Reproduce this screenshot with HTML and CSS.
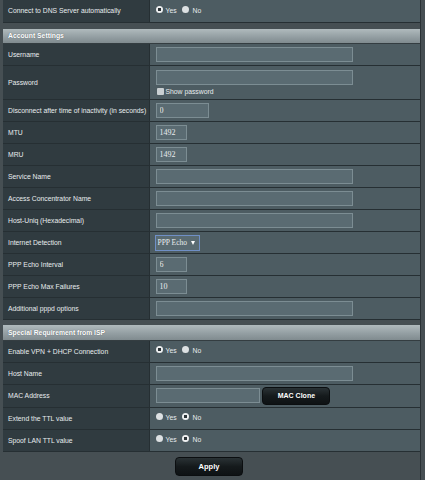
FILE: index.html
```html
<!DOCTYPE html>
<html lang="en">
<head>
    <meta charset="UTF-8">
    <meta name="viewport" content="width=device-width, initial-scale=1.0">
    <title>WAN - PPPoE Settings</title>
    <link rel="stylesheet" href="styles.css">
</head>
<body>
    <div class="page">
        <!-- DNS row (top of the previous section) -->
        <table class="form-table">
            <tr>
                <th>Connect to DNS Server automatically</th>
                <td>
                    <label class="radio"><input type="radio" name="dns" checked>Yes</label>
                    <label class="radio"><input type="radio" name="dns">No</label>
                </td>
            </tr>
        </table>

        <!-- Account settings -->
        <table class="form-table">
            <thead>
                <tr><td colspan="2">Account Settings</td></tr>
            </thead>
            <tr>
                <th>Username</th>
                <td><input type="text" class="input-text wide"></td>
            </tr>
            <tr class="tall">
                <th>Password</th>
                <td>
                    <input type="password" class="input-text wide">
                    <label class="check"><input type="checkbox">Show password</label>
                </td>
            </tr>
            <tr>
                <th>Disconnect after time of inactivity (in seconds)</th>
                <td><input type="text" class="input-text mid" value="0"></td>
            </tr>
            <tr>
                <th>MTU</th>
                <td><input type="text" class="input-text short" value="1492"></td>
            </tr>
            <tr>
                <th>MRU</th>
                <td><input type="text" class="input-text short" value="1492"></td>
            </tr>
            <tr>
                <th>Service Name</th>
                <td><input type="text" class="input-text wide"></td>
            </tr>
            <tr>
                <th>Access Concentrator Name</th>
                <td><input type="text" class="input-text wide"></td>
            </tr>
            <tr>
                <th>Host-Uniq (Hexadecimal)</th>
                <td><input type="text" class="input-text wide"></td>
            </tr>
            <tr>
                <th>Internet Detection</th>
                <td>
                    <div class="select-box">PPP Echo <span class="arrow"></span></div>
                </td>
            </tr>
            <tr>
                <th>PPP Echo Interval</th>
                <td><input type="text" class="input-text short" value="6"></td>
            </tr>
            <tr>
                <th>PPP Echo Max Failures</th>
                <td><input type="text" class="input-text short" value="10"></td>
            </tr>
            <tr>
                <th>Additional pppd options</th>
                <td><input type="text" class="input-text wide"></td>
            </tr>
        </table>

        <!-- Special requirement from ISP -->
        <table class="form-table">
            <thead>
                <tr><td colspan="2">Special Requirement from ISP</td></tr>
            </thead>
            <tr>
                <th>Enable VPN + DHCP Connection</th>
                <td>
                    <label class="radio"><input type="radio" name="vpn" checked>Yes</label>
                    <label class="radio"><input type="radio" name="vpn">No</label>
                </td>
            </tr>
            <tr>
                <th>Host Name</th>
                <td><input type="text" class="input-text wide"></td>
            </tr>
            <tr class="mac">
                <th>MAC Address</th>
                <td>
                    <input type="text" class="input-text mac-input">
                    <button class="button-dark small">MAC Clone</button>
                </td>
            </tr>
            <tr>
                <th>Extend the TTL value</th>
                <td>
                    <label class="radio"><input type="radio" name="ttl">Yes</label>
                    <label class="radio"><input type="radio" name="ttl" checked>No</label>
                </td>
            </tr>
            <tr>
                <th>Spoof LAN TTL value</th>
                <td>
                    <label class="radio"><input type="radio" name="spoof">Yes</label>
                    <label class="radio"><input type="radio" name="spoof" checked>No</label>
                </td>
            </tr>
        </table>

        <div class="apply-row">
            <button class="button-dark apply">Apply</button>
        </div>
    </div>
</body>
</html>
```

FILE: styles.css
```css
/* Page */
body {
    margin: 0;
    background-color: #464f53;
    font-family: "Liberation Sans", Arial, sans-serif;
    font-size: 6.8px;
    color: #e8ecee;
}

.page {
    width: 417px;
    margin-left: 3px;
    border-right: 1px solid #2a3236;
    min-height: 480px;
}

/* Form tables */
.form-table {
    width: 100%;
    border-collapse: collapse;
    margin-bottom: 5px;
}

.form-table:first-child {
    margin-bottom: 6px;
}

.form-table th,
.form-table td {
    height: 22px;
    padding: 0 0 0 5px;
    border-bottom: 1px solid #262f33;
    box-sizing: border-box;
    vertical-align: middle;
}

.form-table th {
    width: 146px;
    text-align: left;
    font-weight: normal;
    background-color: #303b40;
    border-right: 1px solid #262f33;
    white-space: nowrap;
}

.form-table td {
    background-color: #4d5c62;
    padding-left: 6px;
}

.form-table thead td {
    height: 15px;
    padding-left: 5px;
    font-weight: bold;
    color: #ffffff;
    text-shadow: 0 0 1px #4a5458;
    background: linear-gradient(to bottom, #b0babd 0%, #949fa3 55%, #808b8f 100%);
    border-bottom: 1px solid #343d41;
}

.form-table tr.tall th,
.form-table tr.tall td {
    height: 34px;
}

.form-table tr.mac th,
.form-table tr.mac td {
    height: 23px;
}

/* Text inputs */
.input-text {
    display: block;
    height: 15px;
    box-sizing: border-box;
    padding: 0 0 0 3px;
    margin: 0;
    background-color: #5a6b72;
    border: 1px solid #7c8d93;
    color: #e8ecee;
    font-family: "Liberation Serif", "Times New Roman", serif;
    font-size: 8px;
}

.input-text.wide { width: 197px; }
.input-text.mid { width: 53px; }
.input-text.short { width: 31px; }
.input-text.mac-input { width: 104px; display: inline-block; vertical-align: middle; }

/* Select */
.select-box {
    width: 45px;
    height: 16px;
    box-sizing: border-box;
    margin-left: -1px;
    padding-left: 2px;
    display: flex;
    align-items: center;
    white-space: nowrap;
    background-color: #5a6b72;
    border: 1px solid #6f8fc6;
    font-family: "Liberation Serif", "Times New Roman", serif;
    font-size: 7.5px;
}

.select-box .arrow {
    margin-left: 4px;
    width: 0;
    height: 0;
    border-left: 2.5px solid transparent;
    border-right: 2.5px solid transparent;
    border-top: 4px solid #ffffff;
}

/* Radios and checkbox */
.radio,
.check {
    display: inline-flex;
    align-items: center;
    margin-right: 4px;
    font-size: 6.8px;
}

.radio input {
    appearance: none;
    width: 7px;
    height: 7px;
    margin: 0 3px 0 0;
    border-radius: 50%;
    background-color: #dde1e3;
    position: relative;
    top: -1px;
}

.radio input:checked {
    background: radial-gradient(circle, #2c3438 0 1.5px, #eef0f1 2px);
}

.check {
    display: flex;
    margin-top: 3px;
}

.check input {
    appearance: none;
    width: 7px;
    height: 7px;
    margin: 0 2px 0 1px;
    background-color: #c9cfd2;
    border-radius: 1px;
}

/* Dark buttons */
.button-dark {
    background: linear-gradient(to bottom, #2a3235 0%, #151a1c 50%, #0e1214 100%);
    border: 1px solid #0b0e10;
    border-radius: 4px;
    color: #ffffff;
    font-family: "Liberation Sans", Arial, sans-serif;
    font-weight: bold;
    cursor: pointer;
}

.button-dark.small {
    width: 68px;
    height: 18px;
    margin-left: 1px;
    font-size: 7px;
    vertical-align: middle;
}

.apply-row {
    display: flex;
    justify-content: center;
    padding-top: 0;
}

.button-dark.apply {
    width: 68px;
    height: 19px;
    margin-left: -5px;
    font-size: 7.5px;
}
```
